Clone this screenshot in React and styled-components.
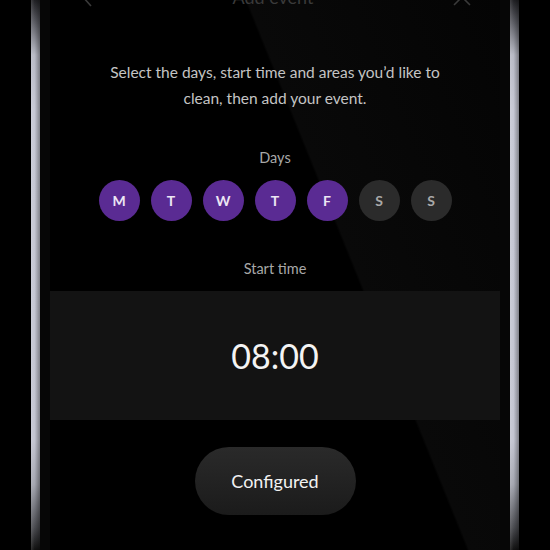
import React from "react";
import styled, { createGlobalStyle } from "styled-components";

const days = [
  { label: "M", on: true },
  { label: "T", on: true },
  { label: "W", on: true },
  { label: "T", on: true },
  { label: "F", on: true },
  { label: "S", on: false },
  { label: "S", on: false },
];

const GlobalStyle = createGlobalStyle`
  html, body {
    margin: 0;
    padding: 0;
    background: #000;
    overflow: hidden;
  }
  body {
    font-family: Lato, "Liberation Sans", sans-serif;
  }
`;

function App() {
  return (
    <>
      <GlobalStyle />
      <Page>
        <Phone>
          <Rail />
          <Bezel>
            <Screen>
              <Header>
                <HeaderIcon>
                  <svg width="14" height="20" viewBox="0 0 14 20">
                    <path d="M11 1 L3 10 L11 19" fill="none" stroke="#3a3a3a" strokeWidth="1.6" />
                  </svg>
                </HeaderIcon>
                <Title>Add event</Title>
                <HeaderIcon>
                  <svg width="20" height="20" viewBox="0 0 20 20">
                    <path d="M2 2 L18 18 M18 2 L2 18" fill="none" stroke="#3a3a3a" strokeWidth="1.6" />
                  </svg>
                </HeaderIcon>
              </Header>

              <Intro>
                Select the days, start time and areas you’d like to
                <br />
                clean, then add your event.
              </Intro>

              <Label $top={37}>Days</Label>
              <DayRow>
                {days.map((d, i) => (
                  <Day key={i} $on={d.on}>
                    {d.label}
                  </Day>
                ))}
              </DayRow>

              <Label $top={38}>Start time</Label>
              <TimePanel>08:00</TimePanel>

              <Button>Configured</Button>
            </Screen>
          </Bezel>
          <Rail />
        </Phone>
      </Page>
    </>
  );
}

export default App;

const Page = styled.div`
  width: 550px;
  height: 550px;
  background: #000;
  display: flex;
  justify-content: flex-start;
  padding-left: 31px;
  box-sizing: border-box;
`;

const Phone = styled.div`
  display: flex;
  width: 488px;
  height: 550px;
`;

const Rail = styled.div`
  width: 9px;
  height: 100%;
  background:
    linear-gradient(90deg, rgba(255,255,255,0.12), rgba(0,0,0,0) 40%, rgba(0,0,0,0.35)),
    linear-gradient(
      180deg,
      #202024 0%,
      #5a5b62 4%,
      #b7b9c4 10%,
      #c6c8d4 20%,
      #c3c5d1 80%,
      #a4a6b0 88%,
      #4a4b50 96%,
      #111 100%
    );
`;

const Bezel = styled.div`
  flex: 1;
  display: flex;
  padding: 0 10px;
  background: #060606;
`;

const Screen = styled.div`
  flex: 1;
  display: flex;
  flex-direction: column;
  align-items: center;
  overflow: hidden;
  background: linear-gradient(68deg, #000 0%, #000 62%, #090909 62.4%, #040404 100%);
`;

const Header = styled.div`
  width: 100%;
  height: 24px;
  margin-top: -15px;
  display: flex;
  align-items: center;
  justify-content: space-between;
  padding: 0 28px 0 30px;
  box-sizing: border-box;
`;

const HeaderIcon = styled.div`
  display: flex;
  align-items: center;
`;

const Title = styled.div`
  font-size: 18px;
  color: #3a3a3a;
`;

const Intro = styled.p`
  margin: 50px 0 0;
  font-size: 15.5px;
  line-height: 26px;
  color: #c4c4c4;
  text-align: center;
`;

const Label = styled.div`
  margin-top: ${(p) => p.$top}px;
  font-size: 14.5px;
  line-height: 20px;
  color: #a8a8a8;
`;

const DayRow = styled.div`
  margin-top: 12px;
  display: flex;
  gap: 11px;
`;

const Day = styled.div`
  width: 41px;
  height: 41px;
  border-radius: 50%;
  display: flex;
  align-items: center;
  justify-content: center;
  font-size: 14px;
  font-weight: 700;
  color: ${(p) => (p.$on ? "#ece6f4" : "#a9a9a9")};
  background: ${(p) => (p.$on ? "#5a2b93" : "#2b2b2b")};
`;

const TimePanel = styled.div`
  margin-top: 12px;
  width: 100%;
  height: 129px;
  background: #131313;
  display: flex;
  align-items: center;
  justify-content: center;
  font-size: 34px;
  font-weight: 400;
  color: #f4f4f4;
`;

const Button = styled.button`
  margin-top: 27px;
  width: 161px;
  height: 68px;
  border: none;
  border-radius: 34px;
  background: linear-gradient(180deg, #2a2a2a, #1b1b1b);
  color: #f2f2f2;
  font-family: Lato, "Liberation Sans", sans-serif;
  font-size: 18px;
  font-weight: 400;
`;
